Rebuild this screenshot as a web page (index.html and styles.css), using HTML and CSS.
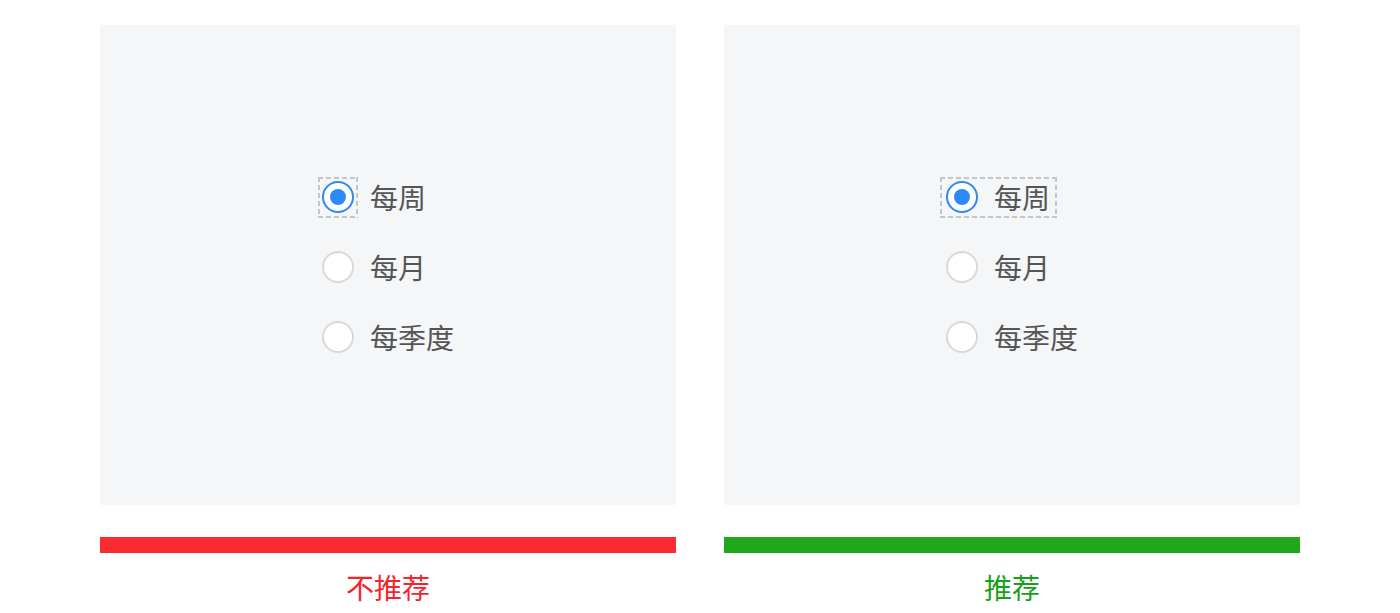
FILE: index.html
```html
<!DOCTYPE html>
<html lang="zh-CN">
<head>
    <meta charset="UTF-8" />
    <meta name="viewport" content="width=device-width, initial-scale=1.0" />
    <title>单选框焦点</title>
    <link rel="stylesheet" href="styles.css">
</head>
<body>
    <div class="compare">
        <section class="case">
            <div class="panel">
                <div class="group">
                    <label class="option">
                        <span class="mark focus"><span class="radio checked"></span></span>
                        <span class="text">每周</span>
                    </label>
                    <label class="option">
                        <span class="mark"><span class="radio"></span></span>
                        <span class="text">每月</span>
                    </label>
                    <label class="option">
                        <span class="mark"><span class="radio"></span></span>
                        <span class="text">每季度</span>
                    </label>
                </div>
            </div>
            <div class="bar bad"></div>
            <p class="verdict bad">不推荐</p>
        </section>
        <section class="case">
            <div class="panel">
                <div class="group">
                    <label class="option focus">
                        <span class="mark"><span class="radio checked"></span></span>
                        <span class="text">每周</span>
                    </label>
                    <label class="option">
                        <span class="mark"><span class="radio"></span></span>
                        <span class="text">每月</span>
                    </label>
                    <label class="option">
                        <span class="mark"><span class="radio"></span></span>
                        <span class="text">每季度</span>
                    </label>
                </div>
            </div>
            <div class="bar good"></div>
            <p class="verdict good">推荐</p>
        </section>
    </div>
</body>
</html>
```

FILE: styles.css
```css
html {
    font: 16px/1.5 "Noto Sans CJK SC", "Noto Sans", sans-serif;
}

body {
    margin: 0;
    padding: 0;
    background-color: #fff;
    color: #555;
}

.compare {
    display: flex;
    justify-content: center;
    gap: 48px;
    padding-top: 25px;
}

.case {
    width: 576px;
}

.panel {
    display: flex;
    justify-content: center;
    align-items: center;
    height: 480px;
    background-color: #f5f6f8;
}

.group {
    display: flex;
    flex-direction: column;
    align-items: flex-start;
    gap: 38px;
    margin-top: 4px;
}

.option {
    position: relative;
    display: flex;
    align-items: center;
    gap: 16px;
    height: 32px;
    font-size: 28px;
    line-height: 31px;
    color: #555;
}

.mark {
    position: relative;
    display: block;
    width: 32px;
    height: 32px;
}

/* 焦点の点線枠 */
.focus::before {
    content: "";
    position: absolute;
    background:
        repeating-linear-gradient(90deg, #c4c6c9 0 5px, transparent 5px 8px) top / 100% 2px no-repeat,
        repeating-linear-gradient(90deg, #c4c6c9 0 5px, transparent 5px 8px) bottom / 100% 2px no-repeat,
        repeating-linear-gradient(180deg, #c4c6c9 0 5px, transparent 5px 8px) left / 2px 100% no-repeat,
        repeating-linear-gradient(180deg, #c4c6c9 0 5px, transparent 5px 8px) right / 2px 100% no-repeat;
}

.mark.focus::before {
    inset: -4px -4px -5px -4px;
}

.option.focus::before {
    inset: -4px -7px -5px -6px;
}

.radio {
    position: relative;
    display: block;
    width: 32px;
    height: 32px;
    border: 2px solid #d9d9d9;
    border-radius: 50%;
    background-color: #fff;
    box-sizing: border-box;
}

.radio.checked {
    border-color: #2b8af7;
}

.radio.checked::after {
    content: "";
    position: absolute;
    top: 6px;
    left: 6px;
    width: 16px;
    height: 16px;
    border-radius: 50%;
    background-color: #2b8af7;
}

.bar {
    height: 16px;
    margin-top: 32px;
}

.bar.bad {
    background-color: #fa2c32;
}

.bar.good {
    background-color: #1ea81a;
}

.verdict {
    margin: 14px 0 0;
    font-size: 28px;
    line-height: 40px;
    text-align: center;
}

.verdict.bad {
    color: #f5242c;
}

.verdict.good {
    color: #17a117;
}
```
